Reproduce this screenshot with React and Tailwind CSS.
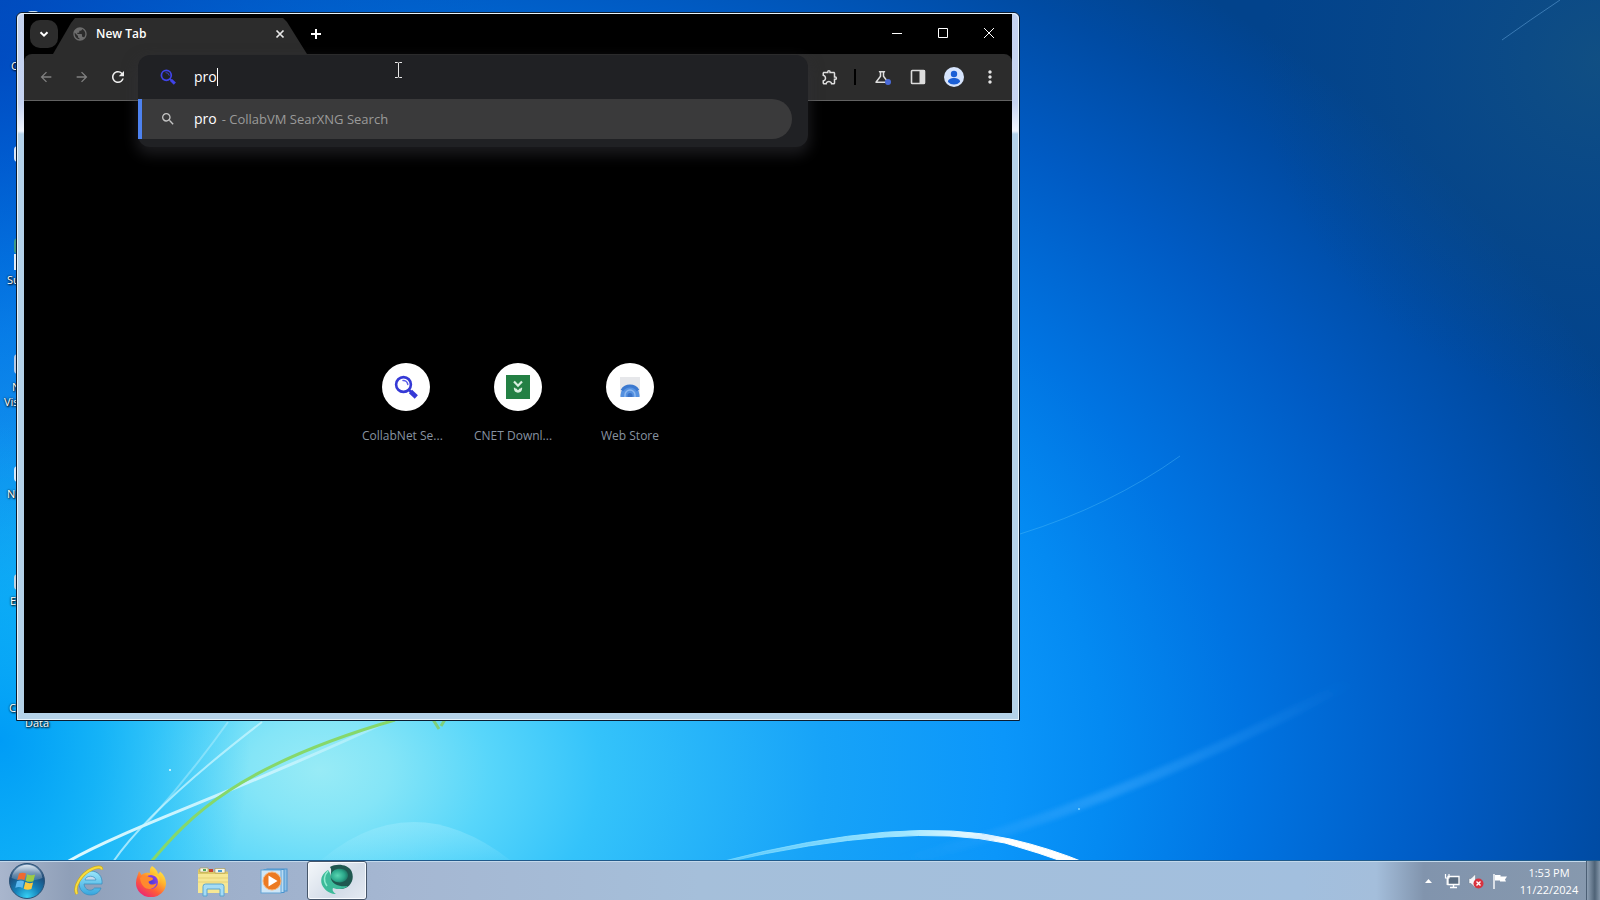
import React from "react";
import {
  MdArrowBack,
  MdArrowForward,
  MdRefresh,
  MdSearch,
  MdMoreVert,
  MdOutlineExtension,
  MdOutlineScience,
  MdPublic,
} from "react-icons/md";

function Wallpaper() {
  return (
    <svg
      className="absolute inset-0 h-full w-full"
      viewBox="0 0 1600 900"
      preserveAspectRatio="none"
      aria-hidden="true"
    >
      <defs>
        <radialGradient
          id="sky"
          gradientUnits="userSpaceOnUse"
          cx="0"
          cy="0"
          r="1"
          gradientTransform="translate(320 770) scale(1400 1000)"
        >
          <stop offset="0" stopColor="#98ebf6" />
          <stop offset="0.05" stopColor="#84e5f7" />
          <stop offset="0.12" stopColor="#58d6fa" />
          <stop offset="0.2" stopColor="#34c3fa" />
          <stop offset="0.36" stopColor="#17a3f8" />
          <stop offset="0.49" stopColor="#0b96fa" />
          <stop offset="0.56" stopColor="#048af2" />
          <stop offset="0.66" stopColor="#0074e2" />
          <stop offset="0.8" stopColor="#005bc4" />
          <stop offset="0.92" stopColor="#004ba3" />
          <stop offset="1" stopColor="#02438c" />
        </radialGradient>
        <radialGradient
          id="leftShade"
          gradientUnits="userSpaceOnUse"
          cx="0"
          cy="0"
          r="1"
          gradientTransform="translate(0 60) scale(520 640)"
        >
          <stop offset="0" stopColor="#003cb8" stopOpacity="0.6" />
          <stop offset="1" stopColor="#0060d0" stopOpacity="0" />
        </radialGradient>
        <radialGradient
          id="leftBright"
          gradientUnits="userSpaceOnUse"
          cx="0"
          cy="0"
          r="1"
          gradientTransform="translate(0 740) scale(250 320)"
        >
          <stop offset="0" stopColor="#009cf6" />
          <stop offset="0.4" stopColor="#00a8f6" stopOpacity="0.7" />
          <stop offset="1" stopColor="#00b4f8" stopOpacity="0" />
        </radialGradient>
        <radialGradient id="corner" cx="1" cy="0.15" r="0.85">
          <stop offset="0" stopColor="#125082" stopOpacity="0.9" />
          <stop offset="1" stopColor="#0a4888" stopOpacity="0" />
        </radialGradient>
        <linearGradient id="arc" x1="0" x2="1" y1="0" y2="0">
          <stop offset="0" stopColor="#7fdcff" stopOpacity="0.6" />
          <stop offset="0.5" stopColor="#9fe6ff" />
          <stop offset="0.75" stopColor="#ffffff" />
        </linearGradient>
        <linearGradient id="beam" x1="0" x2="1" y1="1" y2="0">
          <stop offset="0" stopColor="#4db0ff" stopOpacity="0" />
          <stop offset="0.4" stopColor="#4db0ff" stopOpacity="0.4" />
          <stop offset="1" stopColor="#4db0ff" stopOpacity="0" />
        </linearGradient>
        <linearGradient id="swoosh" x1="0" x2="1" y1="1" y2="0">
          <stop offset="0" stopColor="#dffaff" />
          <stop offset="0.6" stopColor="#d0f6ff" stopOpacity="0.85" />
          <stop offset="1" stopColor="#d0f6ff" stopOpacity="0.3" />
        </linearGradient>
        <linearGradient id="bubble" x1="0" x2="0" y1="0" y2="1">
          <stop offset="0" stopColor="#a8eeff" stopOpacity="0.4" />
          <stop offset="1" stopColor="#a8eeff" stopOpacity="0" />
        </linearGradient>
        <filter id="soft" x="-10%" y="-10%" width="120%" height="120%">
          <feGaussianBlur stdDeviation="2" />
        </filter>
      </defs>
      <rect width="1600" height="900" fill="url(#sky)" />
      <rect width="560" height="720" fill="url(#leftShade)" />
      <rect y="400" width="260" height="500" fill="url(#leftBright)" />
      <rect x="1200" width="400" height="400" fill="url(#corner)" />

      <path d="M310 870 Q410 775 520 868 Z" fill="url(#bubble)" />
      <path d="M67 862 C130 826 230 795 395 718" fill="none" stroke="url(#swoosh)" strokeWidth="3" />
      <path d="M113 862 Q150 808 262 722" fill="none" stroke="#c8f5ff" strokeOpacity="0.75" strokeWidth="2" />
      <path d="M148 822 Q190 775 228 722" fill="none" stroke="#c8f5ff" strokeOpacity="0.4" strokeWidth="2" />
      <path d="M151 862 C190 815 240 765 395 720" fill="none" stroke="#86d86a" strokeWidth="3" />
      <path d="M432 718l7 11M446 718l-5 8" stroke="#7fd07a" strokeWidth="3" />
      <circle cx="170" cy="770" r="1" fill="#e8fdff" />

      <path d="M720 862 Q905 814 1010 839 Q1050 848 1088 864 L1070 864 Q1040 853 1005 843 Q905 821 722 863 Z" fill="url(#arc)" stroke="url(#arc)" strokeWidth="1" />
      <path d="M900 862 Q1120 805 1350 682" fill="none" stroke="url(#beam)" strokeWidth="10" filter="url(#soft)" />
      <circle cx="1079" cy="809" r="1" fill="#7fd4ff" />
      <path d="M1020 534 Q1110 506 1180 456" fill="none" stroke="#52bdf8" strokeOpacity="0.4" strokeWidth="1" />
      <path d="M1502 40 Q1530 20 1560 0" fill="none" stroke="#4e8fc8" strokeOpacity="0.7" strokeWidth="1" />
    </svg>
  );
}

function DesktopIcon({ place, label }) {
  return (
    <div className={`absolute flex flex-col items-start ${place}`}>
      <span className="whitespace-pre text-[11px] leading-[15px] text-white [text-shadow:1px_1px_2px_#000,0_0_2px_#000]">
        {label}
      </span>
    </div>
  );
}

function DesktopIcons() {
  return (
    <div>
      <div className="absolute left-[27px] top-[11px] h-6 w-3 rounded-sm bg-[#c5dcf2]" />
      <div className="absolute left-[14px] top-[146px] h-4 w-8 rounded-sm bg-[#dce6f4]" />
      <div className="absolute left-[14px] top-[238px] h-4 w-8 rounded-sm bg-[#3f9a86]" />
      <div className="absolute left-[14px] top-[254px] h-4 w-8 bg-[#e3ecf5]" />
      <div className="absolute left-[14px] top-[354px] h-5 w-8 rounded-sm bg-[#b7c9e4]" />
      <div className="absolute left-[14px] top-[466px] h-4 w-8 rounded-sm bg-[#d8e8f8]" />
      <div className="absolute left-[14px] top-[574px] h-4 w-8 rounded-sm bg-[#c3d3e0]" />
      <DesktopIcon place="left-[11px] top-[58px]" label="C" />
      <DesktopIcon place="left-[7px] top-[272px]" label="Su" />
      <DesktopIcon place="left-[12px] top-[379px]" label="N" />
      <DesktopIcon place="left-[4px] top-[394px]" label="Vis" />
      <DesktopIcon place="left-[7px] top-[486px]" label="N" />
      <DesktopIcon place="left-[10px] top-[593px]" label="E" />
      <DesktopIcon place="left-[9px] top-[700px]" label="C" />
      <DesktopIcon place="left-[25px] top-[715px]" label="Data" />
    </div>
  );
}

function BlueLens({ className, dark }) {
  return (
    <svg className={className} viewBox="0 0 24 24" fill="none" aria-hidden="true">
      <circle cx="9.5" cy="9.5" r="7.4" stroke={dark ? "#4044e8" : "#3539d6"} strokeWidth="2.6" />
      <path d="M9 5.4a4.6 4.6 0 0 1 4.8 4" stroke={dark ? "#3c40c8" : "#5a5ee8"} strokeWidth="1.5" strokeLinecap="round" />
      <path d="M15 15l2.500 2.300" stroke={dark ? "#4044e8" : "#3539d6"} strokeWidth="2.600" />
      <path d="M16.500 16.500l5.800 5.500" stroke={dark ? "#4044e8" : "#3539d6"} strokeWidth="4.600" />
    </svg>
  );
}

function TabStrip() {
  return (
    <div className="flex h-10 bg-black">
      <div className="flex items-center pl-[6px]">
        <button aria-label="Search tabs" className="flex h-7 w-7 items-center justify-center rounded-[10px] bg-[#2c2c2c]">
          <svg className="h-3 w-3" viewBox="0 0 12 12" fill="none" stroke="#fff" strokeWidth="2">
            <path d="M2.5 4.2L6 7.7l3.5-3.5" />
          </svg>
        </button>
      </div>
      <div className="-ml-[5px] flex h-9 w-[254px] items-center self-end bg-[#2c2c2c] pb-1 pl-[19px] pr-[19px] [clip-path:polygon(0_100%,18px_5px,22px_0,230px_0,234px_4px,100%_100%)]">
        <MdPublic className="h-4 w-4 text-[#6c6c6c]" />
        <span className="flex-1 pl-[8px] text-xs font-semibold leading-4 text-white">New Tab</span>
        <button aria-label="Close tab" className="flex h-4 w-4 items-center justify-center">
          <svg className="h-[10px] w-[10px]" viewBox="0 0 10 10" stroke="#e8e8e8" strokeWidth="1.7">
            <path d="M1.5 1.5l7 7M8.5 1.5l-7 7" />
          </svg>
        </button>
      </div>
      <button aria-label="New tab" className="flex w-[18px] items-center justify-center">
        <svg className="h-3 w-3" viewBox="0 0 12 12" stroke="#fff" strokeWidth="2">
          <path d="M6 1v10M1 6h10" />
        </svg>
      </button>
      <div className="ml-auto flex pb-[2px]">
        <button aria-label="Minimize" className="flex w-[46px] items-center justify-center">
          <svg className="h-[10px] w-[10px]" viewBox="0 0 10 10" stroke="#fff"><path d="M0 5.5h10" /></svg>
        </button>
        <button aria-label="Maximize" className="flex w-[46px] items-center justify-center">
          <svg className="h-[10px] w-[10px]" viewBox="0 0 10 10" fill="none" stroke="#fff"><path d="M.5.5h9v9h-9z" /></svg>
        </button>
        <button aria-label="Close" className="flex w-[46px] items-center justify-center">
          <svg className="h-[10px] w-[10px]" viewBox="0 0 10 10" stroke="#fff"><path d="M0 0l10 10M10 0L0 10" /></svg>
        </button>
      </div>
    </div>
  );
}

function Omnibox() {
  return (
    <div className="relative h-[46px] min-w-0 flex-1">
      <div className="absolute -left-px right-1 top-px z-10 rounded-[12px] bg-[#202124] pb-2 shadow-[0_6px_14px_2px_rgba(50,50,54,0.55)]">
        <label className="flex h-11 items-center pl-[22px]">
          <BlueLens className="h-4 w-4" dark />
          <span className="flex items-center pl-[18px]">
            <input
              aria-label="Address and search bar"
              defaultValue="pro"
              className="bg-transparent text-sm leading-5 text-white outline-none [field-sizing:content]"
            />
            <span className="h-[18px] w-px bg-white" />
          </span>
        </label>
        <button className="flex h-10 w-[654px] max-w-full items-center rounded-l-[3px] rounded-r-full border-l-4 border-[#4d82f0] bg-[#3a3a3b] pl-[18px] text-left leading-5">
          <MdSearch className="h-4 w-4 text-[#c4c4c4]" />
          <span className="pl-[18px] text-sm text-white">pro</span>
          <span className="pl-[5px] text-[13px] text-[#9a9a9a]">- CollabVM SearXNG Search</span>
        </button>
      </div>
    </div>
  );
}

function Toolbar() {
  const tool = "flex h-9 w-9 items-center justify-center";
  return (
    <div className="bg-black">
      <div className="flex h-[47px] items-center rounded-t-lg border-b border-[#626262] bg-[#2c2c2c]">
        <div className="flex w-[115px] items-center pl-1">
          <button aria-label="Back" className={tool}><MdArrowBack className="h-4 w-4 text-[#808080]" /></button>
          <button aria-label="Forward" className={tool}><MdArrowForward className="h-4 w-4 text-[#808080]" /></button>
          <button aria-label="Reload" className={tool}><MdRefresh className="h-[18px] w-[18px] text-[#f0f0f0]" /></button>
        </div>
        <Omnibox />
        <div className="flex items-center pr-1">
          <button aria-label="Extensions" className={tool}>
            <MdOutlineExtension className="h-[18px] w-[18px] text-[#dedede]" />
          </button>
          <span className="ml-[6px] mr-2 h-4 w-[2px] bg-black" />
          <button aria-label="Labs" className={tool}>
            <span className="relative flex">
              <MdOutlineScience className="h-[18px] w-[18px] text-[#dedede]" />
              <span className="absolute bottom-px right-0 h-[6px] w-[6px] rounded-full bg-[#4a6ad8]" />
            </span>
          </button>
          <button aria-label="Side panel" className={tool}>
            <svg className="h-4 w-4" viewBox="0 0 16 16" fill="none">
              <rect x="1.5" y="1.5" width="13" height="13" rx="0.8" stroke="#dcdcdc" strokeWidth="1.6" />
              <path d="M9.5 1h5.5v14H9.5z" fill="#dcdcdc" />
            </svg>
          </button>
          <button aria-label="Profile" className={tool}>
            <svg className="h-5 w-5" viewBox="0 0 20 20">
              <circle cx="10" cy="10" r="10" fill="#d6e4fc" />
              <circle cx="10" cy="7" r="3.2" fill="#1a5fd6" />
              <path d="M4 14.6c0-2.3 3-3.5 6-3.5s6 1.2 6 3.5v.3a8 8 0 0 1-12 0z" fill="#1a5fd6" />
            </svg>
          </button>
          <button aria-label="Menu" className={tool}><MdMoreVert className="h-5 w-5 text-[#e4e4e4]" /></button>
        </div>
      </div>
    </div>
  );
}

function Shortcut({ label, children, clipped }) {
  return (
    <a href="#" className="flex w-28 flex-col items-center">
      <span className="flex h-12 w-12 items-center justify-center rounded-full bg-white">{children}</span>
      <span className={`mt-[17px] w-[88px] whitespace-nowrap text-xs leading-4 text-[#8793a1] ${clipped ? "text-left" : "text-center"}`}>
        {label}
      </span>
    </a>
  );
}

function NewTabPage() {
  return (
    <div className="flex flex-1 justify-center bg-black pt-[262px]">
      <Shortcut label="CollabNet Se..." clipped>
        <BlueLens className="h-6 w-6" />
      </Shortcut>
      <Shortcut label="CNET Downl..." clipped>
        <svg className="h-6 w-6" viewBox="0 0 24 24" fill="none">
          <rect width="24" height="24" fill="#238044" />
          <path d="M8 6.500l4 4.200 4-4.200" stroke="#d9efe0" strokeWidth="2.200" />
          <path d="M8.500 12.800c.3 5.600 6.700 5.600 7 0M9.500 13.800l2.500 2.400 2.500-2.400" stroke="#d9efe0" strokeWidth="1.500" />
        </svg>
      </Shortcut>
      <Shortcut label="Web Store">
        <svg className="h-6 w-6" viewBox="0 0 24 24" fill="none">
          <path d="M2 2h20v20H2z" fill="#e6e7ea" />
          <path d="M2.500 22v-2a9.500 9.500 0 0 1 19 0v2z" fill="#5591e0" />
          <path d="M4 15.500a9.500 9.500 0 0 1 16 0" stroke="#3b78cf" strokeWidth="3" />
          <path d="M7 22v-2a5 5 0 0 1 10 0v2" stroke="#8db8f0" strokeWidth="1.400" />
          <path d="M9.500 22v-1.500a2.500 2.500 0 0 1 5 0V22z" fill="#3a73c8" />
        </svg>
      </Shortcut>
    </div>
  );
}

function BrowserWindow() {
  return (
    <section className="absolute left-4 top-3 h-[709px] w-[1004px] rounded-t-md border border-[#0b1c30] bg-[linear-gradient(180deg,#c4d2ee_0,#c6d4f2_90px,#f0f5fd_118px,#b4d2ea_121px,#b4d2e8_100%)]">
      <div className="flex h-full flex-col rounded-t-md border border-[#e8f4fb] px-[6px] pb-[6px]">
        <div className="flex min-h-0 flex-1 flex-col bg-black">
          <TabStrip />
          <Toolbar />
          <NewTabPage />
        </div>
      </div>
    </section>
  );
}

function TextCursor() {
  return (
    <svg className="absolute left-[394px] top-[61px] z-20 h-[18px] w-[9px]" viewBox="0 0 9 18" fill="none" stroke="#e8e8e8" aria-hidden="true">
      <path d="M1 1.500h2.500L4.500 2l1-.5H8M1 16.500h2.500l1-.5 1 .5H8M4.500 2v14" />
    </svg>
  );
}

function StartOrb() {
  return (
    <svg className="h-9 w-9" viewBox="0 0 36 36">
      <defs>
        <radialGradient id="orb" cx="0.5" cy="0.95" r="0.9">
          <stop offset="0" stopColor="#35d0f4" />
          <stop offset="0.4" stopColor="#1580b8" />
          <stop offset="0.8" stopColor="#1d4a78" />
          <stop offset="1" stopColor="#5c7ea2" />
        </radialGradient>
        <linearGradient id="orbShine" x1="0" x2="0" y1="0" y2="1">
          <stop offset="0" stopColor="#e6eff8" stopOpacity="0.9" />
          <stop offset="1" stopColor="#b4cbe0" stopOpacity="0.2" />
        </linearGradient>
      </defs>
      <circle cx="18" cy="18" r="17.500" fill="url(#orb)" stroke="#2c5276" />
      <path d="M2.500 15a15.700 15.700 0 0 1 31 0c-9 3.500-22 3.500-31 0z" fill="url(#orbShine)" />
      <path d="M10 10.500c2.800-1.300 5-1 7 .1l-1.600 6.600c-2-1.200-4.400-1.300-7.200-.2z" fill="#ee6a30" />
      <path d="M18.200 11.200c2.600 1.400 5 1.500 7.900.3l-1.700 6.700c-2.700 1-5.300.9-7.800-.5z" fill="#9ccb45" />
      <path d="M7.900 18.200c2.800-1.200 5.200-1 7.200.2l-1.600 6.500c-2.200-1.200-4.400-1.300-7.200-.2z" fill="#5cb8f0" />
      <path d="M16.300 19c2.500 1.300 5.100 1.500 7.800.5l-1.700 6.500c-2.800 1.200-5.400 1-7.700-.3z" fill="#fbc93e" />
    </svg>
  );
}

function ExplorerE() {
  return (
    <svg className="h-8 w-8" viewBox="0 0 32 32" fill="none">
      <defs>
        <linearGradient id="ie" x1="0" x2="0" y1="0" y2="1">
          <stop offset="0" stopColor="#9be6fb" />
          <stop offset="1" stopColor="#36a6de" />
        </linearGradient>
      </defs>
      <path d="M10 19h18c.8-7.500-3.800-13-11.500-13S5 11.500 5 18s4.500 12 11.500 12c5 0 9-2.500 10.500-7h-6.500c-3 4.200-10 2.300-10.500-4z" fill="url(#ie)" stroke="#3b8fc0" strokeWidth="0.8" />
      <path d="M11 15c.8-5 10-5 11 0z" fill="#c4d9ec" stroke="#3b8fc0" strokeWidth="0.700" />
      <path d="M3 29C-1 22 7 9 18 4c5-2.500 10-2.500 9.500.5" stroke="#c9a91c" strokeWidth="3.200" />
      <path d="M3 29C-1 22 7 9 18 4c5-2.500 10-2.500 9.500.5" stroke="#f7dc3f" strokeWidth="2" />
    </svg>
  );
}

function Firefox() {
  return (
    <svg className="h-8 w-8" viewBox="0 0 32 32">
      <defs>
        <linearGradient id="fox" x1="0.85" x2="0.2" y1="0.05" y2="1">
          <stop offset="0" stopColor="#fff04a" />
          <stop offset="0.35" stopColor="#ffb02c" />
          <stop offset="0.65" stopColor="#ff5c38" />
          <stop offset="1" stopColor="#e8207c" />
        </linearGradient>
        <radialGradient id="foxCore">
          <stop offset="0" stopColor="#4d3bd8" />
          <stop offset="1" stopColor="#8b3fe6" />
        </radialGradient>
      </defs>
      <path d="M17 1c3.500 2 5.500 5 6 8 1.500-.8 2-2.500 2-2.500 4 3 6 7.500 6 12A15 14 0 0 1 1 18c0-5 2-8 3-12l2.500 4C9 7.500 13 7.500 15 8c-.5-3 0-5 2-7z" fill="url(#fox)" />
      <circle cx="16" cy="17" r="7" fill="url(#foxCore)" />
      <path d="M5 13c3-3.500 7-3 9-1 2 .2 4 .5 4 2-1 2-4 1.500-4.500 3 .5 3 5 3.500 8 1-.7 5-6 7-10 5.500C7 21.500 5.500 17 5 13z" fill="#ff8a2e" />
      <path d="M17 10c4 0 7.500 4 6.500 9 2.500-5 0-10-6.500-9z" fill="#ffcf3a" />
    </svg>
  );
}

function Folder() {
  return (
    <svg className="h-8 w-8" viewBox="0 0 32 32">
      <path d="M2 4h10l1.500 2.500H30a1 1 0 0 1 1 1V28H1V5z" fill="#dcc868" />
      <path d="M3 3h8v4H3zM18 3.500h10V8H18z" fill="#f7f7e8" stroke="#a79648" strokeWidth="0.600" />
      <path d="M6 4h3v2H6z" fill="#57a657" /><path d="M12 4h4v3h-4z" fill="#c6452e" /><path d="M21 5h4v2h-4z" fill="#4d9ccf" />
      <path d="M1 9h30v19H1z" fill="#f6e794" />
      <path d="M1 13h30M1 17h30" stroke="#e6d277" />
      <path d="M6 31v-9.500A2.500 2.500 0 0 1 8.500 19h16a2.500 2.500 0 0 1 2.500 2.500V31h-4v-7H10v7z" fill="#a5dcf5" stroke="#5aa5cf" />
    </svg>
  );
}

function MediaPlayer() {
  return (
    <svg className="h-7 w-7" viewBox="0 0 28 28">
      <rect x="7" y="2" width="20" height="22" fill="#8fc0e6" stroke="#4a94cf" />
      <rect x="4" y="2.500" width="20" height="23" fill="#b8dbf3" stroke="#4a94cf" />
      <rect x="1" y="3" width="20" height="23" fill="#cfe6f6" stroke="#62a5d8" />
      <circle cx="12" cy="14" r="9" fill="#ec7a22" stroke="#f6b47a" />
      <path d="M8.500 8.500l9 5.500-9 5.500z" fill="#fff" />
    </svg>
  );
}

function TealSphere() {
  return (
    <svg className="h-8 w-8" viewBox="0 0 32 32">
      <defs>
        <radialGradient id="teal" cx="0.4" cy="0.5" r="0.65">
          <stop offset="0" stopColor="#5ad6b2" />
          <stop offset="0.6" stopColor="#2ba88b" />
          <stop offset="1" stopColor="#1b6a5b" />
        </radialGradient>
      </defs>
      <path d="M9 3C15-1 27 0 30.500 7c4 9-2 18-11 18-6 0-9-3-10-7C8 12 12 7 9 3z" fill="#1f5850" />
      <path d="M9.500 13C10 6 16 4 21 5c6 1 8 7 4 11-4 4-13 3-15.500-3z" fill="url(#teal)" />
      <path d="M7 6C0 10-2 18 3 24c3 4 8 6 12 6-3-2-4-4-3-6 5 2 12 1 15-2-8 1-15-1-17-7-1-3 0-6-3-9z" fill="#3dbb9a" />
      <path d="M7 7C3 11 2 17 6 22" fill="none" stroke="#8eeccf" strokeWidth="1.500" />
    </svg>
  );
}

function Taskbar() {
  const slot = "flex h-full items-center justify-center";
  return (
    <footer className="relative flex h-10 shrink-0 items-stretch border-t border-[#1e5a8c] bg-[linear-gradient(90deg,#a9b6cd_0,#8f9fb8_70px,#9dafca_200px,#a5b7d2_400px,#a5bfda_700px,#a2bfde_1300px,#a4bedb_86%,#8194ad_89%,#8799ae_100%)] shadow-[inset_0_1px_0_#c3d9ec]">
      <button aria-label="Start" className={`${slot} w-[54px]`}><StartOrb /></button>
      <button aria-label="Internet Explorer" className={`${slot} ml-[6px] w-[60px]`}><ExplorerE /></button>
      <button aria-label="Firefox" className={`${slot} w-[62px]`}><Firefox /></button>
      <button aria-label="File Explorer" className={`${slot} w-[62px]`}><Folder /></button>
      <button aria-label="Media Player" className={`${slot} w-[60px]`}><MediaPlayer /></button>
      <button aria-label="Browser" className={`${slot} ml-[3px] w-[60px] rounded-[3px] border border-[#46566a] bg-[linear-gradient(135deg,#f4f7fa,#d3dce8_60%,#e4eaf2)] pb-[2px] shadow-[inset_0_0_0_1px_#f8fbff]`}>
        <TealSphere />
      </button>
      <div className="ml-auto flex items-center">
        <button aria-label="Show hidden icons" className="flex w-6 justify-center">
          <svg className="h-1 w-[7px]" viewBox="0 0 7 4"><path d="M0 4l3.500-4L7 4z" fill="#fff" /></svg>
        </button>
        <button aria-label="Network" className="flex w-6 justify-center">
          <svg className="h-4 w-4" viewBox="0 0 16 16" fill="none">
            <path d="M4 3.500h11v8H4z" fill="#5a6c80" stroke="#fff" strokeWidth="1.300" />
            <path d="M9.500 12v2M6 14.500h7" stroke="#fff" strokeWidth="1.400" />
            <path d="M1.500 1v4h3.500V1M3.200 5v7" stroke="#fff" strokeWidth="1.200" />
          </svg>
        </button>
        <button aria-label="Volume" className="flex w-6 justify-center">
          <svg className="h-4 w-4" viewBox="0 0 16 16">
            <path d="M1 5.500h2L7.500 1v14L3 10.500H1z" fill="#f4f6f9" stroke="#6a7888" strokeWidth="0.500" />
            <circle cx="10.500" cy="10.500" r="5" fill="#d8323e" />
            <path d="M8.500 8.500l4 4M12.500 8.500l-4 4" stroke="#fff" strokeWidth="1.400" />
          </svg>
        </button>
        <button aria-label="Action Center" className="flex w-6 justify-center">
          <svg className="h-4 w-4" viewBox="0 0 16 16">
            <path d="M2 1v15" stroke="#fff" strokeWidth="1.400" />
            <path d="M3 2h5.500v1.500H15l-2 3 1 2H8V7.500H3z" fill="#fff" />
          </svg>
        </button>
        <button className="flex w-[74px] flex-col items-center text-[11px] leading-[17px] text-white">
          <span>1:53 PM</span>
          <span>11/22/2024</span>
        </button>
        <button aria-label="Show desktop" className="h-full w-[14px] border-l border-[#4c5f74] bg-[linear-gradient(90deg,#8ea0b4,#4f6377_60%,#8496a9)]" />
      </div>
    </footer>
  );
}

export default function App() {
  return (
    <main className="relative flex h-screen flex-col overflow-hidden bg-[#0078e8] font-['Open_Sans','Noto_Sans',sans-serif]">
      <Wallpaper />
      <div className="relative min-h-0 flex-1">
        <DesktopIcons />
        <BrowserWindow />
        <TextCursor />
      </div>
      <Taskbar />
    </main>
  );
}
